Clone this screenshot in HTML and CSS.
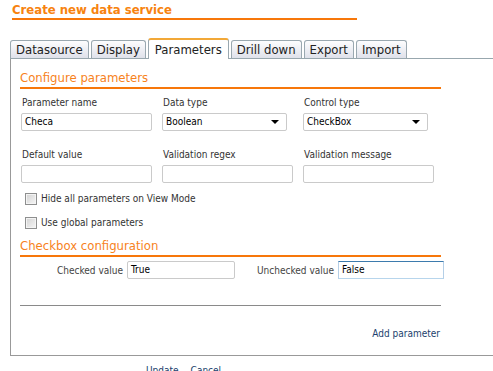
FILE: index.html
```html
<!DOCTYPE html>
<html>
<head>
<meta charset="utf-8">
<link rel="stylesheet" href="styles.css">
</head>
<body>
<div class="page">
  <div class="title">Create new data service</div>
  <div class="tabs">
    <div class="tab">Datasource</div>
    <div class="tab">Display</div>
    <div class="tab active">Parameters</div>
    <div class="tab">Drill down</div>
    <div class="tab">Export</div>
    <div class="tab">Import</div>
  </div>
  <div class="panel">
    <div class="section-head">Configure parameters</div>
    <div class="grid">
      <div class="field">
        <div class="label">Parameter name</div>
        <div class="input">Checa</div>
      </div>
      <div class="field">
        <div class="label">Data type</div>
        <div class="input select">Boolean<span class="arrow"></span></div>
      </div>
      <div class="field">
        <div class="label">Control type</div>
        <div class="input select">CheckBox<span class="arrow"></span></div>
      </div>
      <div class="field">
        <div class="label">Default value</div>
        <div class="input"></div>
      </div>
      <div class="field">
        <div class="label">Validation regex</div>
        <div class="input"></div>
      </div>
      <div class="field">
        <div class="label">Validation message</div>
        <div class="input"></div>
      </div>
    </div>
    <div class="checks">
      <div class="check"><span class="box"></span><span>Hide all parameters on View Mode</span></div>
      <div class="check"><span class="box"></span><span>Use global parameters</span></div>
    </div>
    <div class="section-head second">Checkbox configuration</div>
    <div class="cb-row">
      <div class="cb-label first">Checked value</div>
      <div class="input cb-in1">True</div>
      <div class="cb-label second">Unchecked value</div>
      <div class="input cb-in2 focus">False</div>
    </div>
    <div class="sep"></div>
    <div class="add"><span class="link">Add parameter</span></div>
  </div>
  <div class="actions"><span class="link">Update</span><span class="link">Cancel</span></div>
</div>
</body>
</html>
```
FILE: styles.css
```css
html, body {
  margin: 0;
  padding: 0;
  background: #fff;
  overflow: hidden;
}
body {
  font-family: Tahoma, "DejaVu Sans Condensed", "DejaVu Sans", sans-serif;
  font-size: 10px;
  color: #333;
}
.page {
  padding-left: 10px;
  width: 700px;
}
.title {
  margin-left: 2px;
  margin-top: 2px;
  width: 345px;
  font-size: 13px;
  font-weight: bold;
  line-height: 16px;
  color: #f7830f;
  border-bottom: 2px solid #f7770a;
}
.tabs {
  margin-top: 18px;
  display: flex;
  align-items: flex-end;
  gap: 2px;
  height: 20px;
  border-bottom: 1px solid #98a7ae;
}
.tab {
  height: 17px;
  line-height: 17px;
  padding: 0 5px;
  font-size: 13px;
  color: #222;
  background: linear-gradient(#fdfdfe, #dfe1ea);
  border: 1px solid #9aa8b0;
  border-bottom: none;
  border-radius: 3px 3px 0 0;
}
.tab.active {
  height: 19px;
  line-height: 20px;
  padding: 0 6px;
  background: #fff;
  border-top: 2px solid #f2a838;
  margin-bottom: -1px;
}
.panel {
  border-left: 1px solid #999;
  border-bottom: 1px solid #999;
  padding: 10px 0 14px 9px;
}
.section-head {
  width: 421px;
  font-size: 13px;
  line-height: 17px;
  padding-bottom: 1px;
  color: #f7821c;
  border-bottom: 2px solid #f7770a;
}
.section-head.second {
  margin-top: 8px;
}
.grid {
  display: grid;
  grid-template-columns: 141px 141px 141px;
  row-gap: 17px;
  padding-left: 1px;
  margin-top: 7px;
}
.label {
  line-height: 14px;
  padding-left: 1px;
  color: #333;
}
.input {
  box-sizing: border-box;
  height: 18px;
  width: 131px;
  margin-top: 3px;
  border: 1px solid #cacaca;
  border-radius: 2px;
  padding: 0 3px;
  line-height: 16px;
  color: #000;
  background: #fff;
}
.select {
  width: 125px;
  display: flex;
  align-items: center;
}
.arrow {
  margin-left: auto;
  margin-right: 4px;
  width: 0;
  height: 0;
  border-left: 4px solid transparent;
  border-right: 4px solid transparent;
  border-top: 4px solid #000;
}
.checks {
  margin-top: 10px;
  padding-left: 5px;
  display: flex;
  flex-direction: column;
  gap: 12px;
}
.check {
  display: flex;
  align-items: center;
  gap: 4px;
  height: 12px;
  line-height: 12px;
  color: #333;
}
.box {
  box-sizing: border-box;
  width: 12px;
  height: 12px;
  border: 1px solid #8e8f8f;
  background: linear-gradient(135deg, #d2d2d2, #f6f6f6);
  box-shadow: inset 0 0 0 1px #f4f4f4;
}
.cb-row {
  display: flex;
  align-items: center;
  margin-top: 4px;
}
.cb-label {
  text-align: right;
  margin-right: 4px;
  color: #444;
}
.cb-label.first { width: 103px; }
.cb-label.second { width: 99px; }
.cb-row .input {
  margin-top: 0;
}
.cb-in1 { width: 108px; }
.cb-in2 { width: 106px; }
.focus {
  border-color: #3d7bad #b5cfe7 #b7d5ec #b5cfe7;
  border-radius: 0;
}
.sep {
  width: 421px;
  margin-top: 26px;
  border-top: 1px solid #8a8a8a;
}
.add {
  width: 420px;
  text-align: right;
  margin-top: 21px;
  line-height: 14px;
}
.link {
  color: #1c3f6e;
}
.actions {
  margin-top: 8px;
  padding-left: 136px;
  display: flex;
  gap: 12px;
  line-height: 14px;
}
```
